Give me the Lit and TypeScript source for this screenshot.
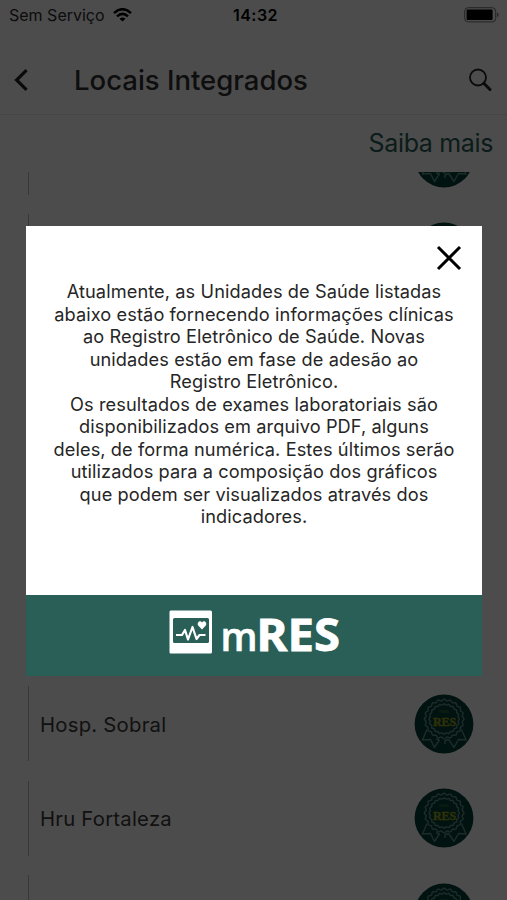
import { LitElement, html, css, svg } from "lit";
import { customElement, property } from "lit/decorators.js";

function scallop(cx: number, cy: number, r: number, amp: number, n: number): string {
  const steps = n * 8;
  let d = "";
  for (let i = 0; i <= steps; i++) {
    const a = (i / steps) * Math.PI * 2;
    const rr = r + amp * Math.cos(a * n);
    d += `${i ? "L" : "M"}${(cx + rr * Math.sin(a)).toFixed(2)} ${(cy - rr * Math.cos(a)).toFixed(2)}`;
  }
  return d + "Z";
}

@customElement("res-badge")
export class ResBadge extends LitElement {
  static styles = css`
    :host { display: block; width: 60px; height: 60px; flex: none; }
    svg { display: block; }
    .line { fill: none; stroke: #628f89; stroke-width: 1.4; stroke-linejoin: round; }
    .res { font: 700 13px "Liberation Serif", serif; fill: #98a01c; stroke: #98a01c; stroke-width: 0.5; }
    .brand { font: 700 4px "Inter", sans-serif; fill: #3a6c3c; }
  `;
  render() {
    return html`<svg width="60" height="60" viewBox="0 0 60 60">
      <circle cx="30" cy="30" r="29.4" fill="#064239" />
      ${svg`<path class="line" d=${scallop(30.2, 25, 19, 0.8, 20)} />
      <path class="line" d=${scallop(30.2, 25, 14.6, 0.6, 20)} />`}
      <path class="line" d="M13 35.5L8.5 46L16.5 45.5L20.5 53.5L25.3 46L22 45M47.5 35.5L52 46L44.5 45.5L40 53.5L35 46L33.5 45M31 50V47L34 45.5" />
      <text class="brand" x="30" y="19" text-anchor="middle">mais</text>
      <text class="res" x="19" y="31.6" textLength="23" lengthAdjust="spacingAndGlyphs">RES</text>
    </svg>`;
  }
}

@customElement("place-row")
export class PlaceRow extends LitElement {
  @property() name = "";
  static styles = css`
    :host { display: flex; align-items: center; justify-content: space-between; box-sizing: border-box; flex: none;
      height: 75px; margin: 0 33px 19.4px 28px; padding-left: 11px; border-left: 1px solid #bdbdbd; }
    .name { font-size: 20.3px; color: #3a3a3a; letter-spacing: 0.24px; padding-top: 0.5px; }
  `;
  render() {
    return html`<span class="name">${this.name}</span><res-badge></res-badge>`;
  }
}

@customElement("app-root")
export class AppRoot extends LitElement {
  static styles = css`
    :host { display: block; position: relative; width: 507px; height: 900px; overflow: hidden; background: #fff;
      font-family: "Inter", "Liberation Sans", sans-serif; }
    .page { display: flex; flex-direction: column; height: 100%; }
    .status { display: grid; grid-template-columns: 1fr auto 1fr; align-items: center; height: 30px; flex: none; padding: 0 7px 0 9px; }
    .carrier { display: flex; align-items: center; gap: 8px; font-size: 16px; color: #2c2c2c; letter-spacing: 0; }
    .time { padding-left: 2px; font-size: 16px; font-weight: 600; color: #000; letter-spacing: 0.5px; }
    .battery { justify-self: end; }
    .bar { display: flex; align-items: center; box-sizing: border-box; height: 85px; flex: none; padding: 15px 15px 0 14px; border-bottom: 1px solid #ececec; }
    .title { flex: 1; margin-left: 46px; font-size: 27.5px; font-weight: 480; color: #303030; }
    .more { flex: none; box-sizing: border-box; height: 57px; padding: 12px 14px 0 0; text-align: right; font-size: 25px; letter-spacing: -0.35px; line-height: 33px; color: #2a5e58; }
    .clip { flex: 1; min-height: 0; overflow: hidden; }
    .list { display: flex; flex-direction: column; margin-top: -52px; }
    .overlay { position: absolute; inset: 0; display: flex; flex-direction: column; background: rgba(0, 0, 0, 0.7); padding: 226px 25px 0 26px; }
    .dialog { display: flex; flex-direction: column; height: 450px; background: #fff; }
    .close { align-self: flex-end; margin: 19px 20.5px 0 0; height: 26px; }
    .body { flex: 1; margin: 0; padding: 9.4px 0 0 0; text-align: center; font-size: 18.2px; letter-spacing: 0.09px; line-height: 22.5px; color: #262626; }
    .line { display: block; white-space: nowrap; }
    .foot { display: flex; align-items: flex-start; box-sizing: border-box; height: 81px; padding: 15px 0 0 143px; background: #2a5f58; }
    .brand { margin-left: 8px; overflow: visible; }
    svg { display: block; }
    .m { font: 600 40px "Open Sans", sans-serif; fill: #fff; stroke: #fff; stroke-width: 0.6; }
    .res { font: 700 45px "Noto Sans", sans-serif; fill: #fff; stroke: #fff; stroke-width: 0.8; }
  `;

  private places = ["", "", "", "", "", "", "Hosp. Sobral", "Hru Fortaleza", ""];
  private lines = [
    "Atualmente, as Unidades de Saúde listadas",
    "abaixo estão fornecendo informações clínicas",
    "ao Registro Eletrônico de Saúde. Novas",
    "unidades estão em fase de adesão ao",
    "Registro Eletrônico.",
    "Os resultados de exames laboratoriais são",
    "disponibilizados em arquivo PDF, alguns",
    "deles, de forma numérica. Estes últimos serão",
    "utilizados para a composição dos gráficos",
    "que podem ser visualizados através dos",
    "indicadores.",
  ];

  render() {
    return html`
      <div class="page">
        <div class="status">
          <div class="carrier"><span>Sem Serviço</span>
            <svg width="19" height="14" viewBox="0 0 19 14" fill="none" stroke="#000" stroke-width="2.6">
              <path d="M1 5.1Q9.5 -2.6 18 5.1" /><path d="M4 8.4Q9.5 3.4 15 8.4" />
              <path d="M9.5 13.6L6.5 10.7Q9.5 8.3 12.5 10.7Z" fill="#000" stroke="none" />
            </svg>
          </div>
          <div class="time">14:32</div>
          <svg class="battery" width="36" height="16" viewBox="0 0 36 16">
            <rect x="0.7" y="0.7" width="31" height="14.2" rx="3.5" fill="none" stroke="#777" stroke-width="1" />
            <rect x="2.6" y="2.4" width="26" height="10.6" rx="1" fill="#000" />
            <path d="M33.2 5.3Q36 7.8 33.2 10.3Z" fill="#666" />
          </svg>
        </div>
        <div class="bar">
          <svg width="14" height="22" viewBox="0 0 14 22" fill="none" stroke="#222" stroke-width="3.2"><path d="M12.6 1.2L2.6 11L12.6 20.8" /></svg>
          <div class="title">Locais Integrados</div>
          <svg width="24" height="24" viewBox="0 0 24 24" fill="none" stroke="#222"><circle cx="10" cy="9.5" r="8" stroke-width="1.8" /><path d="M15.8 15.3L22 21.5" stroke-width="3" stroke-linecap="round" /></svg>
        </div>
        <div class="more">Saiba mais</div>
        <div class="clip"><div class="list">${this.places.map((p) => html`<place-row .name=${p}></place-row>`)}</div></div>
      </div>
      <div class="overlay">
        <div class="dialog">
          <svg class="close" width="26" height="26" viewBox="0 0 26 26" stroke="#000" stroke-width="3"><path d="M2 2L24 24M24 2L2 24" /></svg>
          <p class="body">${this.lines.map((l) => html`<span class="line">${l}</span>`)}</p>
          <div class="foot">
            <svg width="44" height="44" viewBox="0 0 44 44">
              <path fill="#fff" fill-rule="evenodd" d="M1.5 0.5H41.5Q43 0.5 43 2V42Q43 43.5 41.5 43.5H1.5Q0.5 43.5 0.5 42V2Q0.5 0.5 1.5 0.5ZM5.5 8Q4 8 4 9.5V31.5Q4 33 5.5 33H38.5Q40 33 40 31.5V9.5Q40 8 38.5 8Z" />
              <path d="M7 25H13L16 20L19 29.5L23.5 17L27.5 29L30.5 25H36.5" fill="none" stroke="#fff" stroke-width="2.2" stroke-linejoin="round" />
              <path d="M33 19.5L29.2 15.4C27.5 13 30.8 9.5 33 12.5C35.2 9.5 38.5 13 36.8 15.4Z" fill="#fff" />
            </svg>
            <svg class="brand" width="122" height="48" viewBox="0 0 122 48">
              <text class="m" x="-0.5" y="40.7" textLength="37" lengthAdjust="spacingAndGlyphs">m</text>
              <text class="res" x="35.5" y="40.7" textLength="83.5" lengthAdjust="spacingAndGlyphs">RES</text>
            </svg>
          </div>
        </div>
      </div>
    `;
  }
}
